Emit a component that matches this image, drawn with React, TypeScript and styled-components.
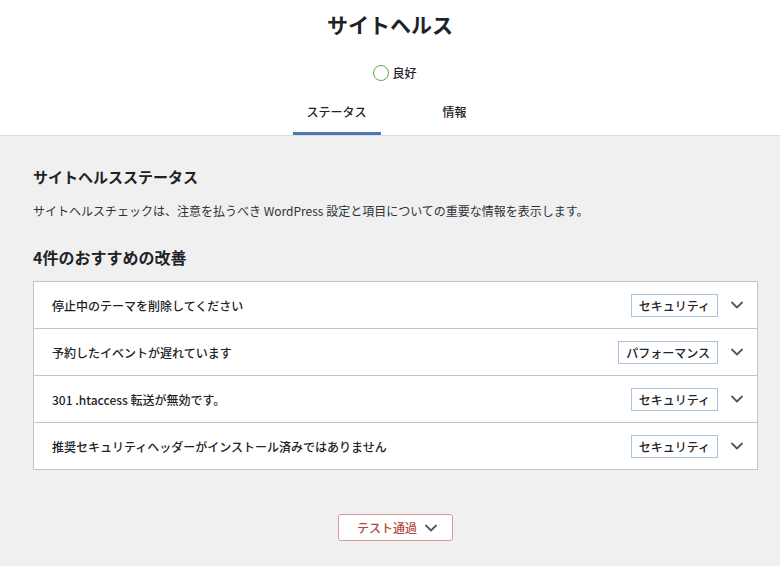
import React from "react";
import styled, { createGlobalStyle } from "styled-components";

const GlobalStyle = createGlobalStyle`
  html, body {
    margin: 0;
    padding: 0;
    background: #f0f0f1;
  }
  body {
    font-family: "Noto Sans CJK JP", "Noto Sans", sans-serif;
    color: #1d2327;
  }
`;

const Header = styled.header`
  background: #fff;
  border-bottom: 1px solid #dcdcde;
  display: flex;
  flex-direction: column;
  align-items: center;
`;

const Title = styled.h1`
  margin: 10px 0 0;
  font-size: 21px;
  font-weight: 700;
  line-height: 28px;
`;

const Status = styled.div`
  margin-top: 26px;
  display: flex;
  align-items: center;
  gap: 3px;
  font-size: 12px;
  font-weight: 500;
  line-height: 18px;
  padding-left: 10px;
`;

const Ring = styled.span`
  width: 14px;
  height: 14px;
  border-radius: 50%;
  border: 1.5px solid #5da94f;
`;

const Tabs = styled.nav`
  margin-top: 17px;
  display: flex;
  padding-left: 11px;
`;

const Tab = styled.div<{ $active?: boolean }>`
  width: 88px;
  margin-right: ${(p) => (p.$active ? "30px" : "0")};
  height: 36px;
  box-sizing: border-box;
  text-align: center;
  font-size: 12px;
  font-weight: 500;
  line-height: 26px;
  padding-bottom: 10px;
  border-bottom: 3px solid ${(p) => (p.$active ? "#4b77b6" : "transparent")};
`;

const Main = styled.main`
  padding: 29px 22px 0 33px;
`;

const SectionTitle = styled.h2`
  margin: 0;
  font-size: 15px;
  font-weight: 600;
  line-height: 24px;
`;

const Lead = styled.p`
  margin: 13px 0 0;
  font-size: 12px;
  line-height: 18px;
  color: #2c3338;
`;

const SubTitle = styled.h3`
  margin: 25px 0 0;
  font-size: 16px;
  font-weight: 600;
  line-height: 24px;
`;

const List = styled.div`
  margin-top: 12px;
  background: #fff;
  border: 1px solid #c3c4c7;
`;

const Row = styled.div`
  height: 46px;
  display: flex;
  align-items: center;
  padding: 0 13px 0 18px;
  & + & {
    border-top: 1px solid #c3c4c7;
  }
`;

const RowLabel = styled.span`
  flex: 1;
  font-size: 12px;
  font-weight: 500;
  color: #1d2327;
`;

const Badge = styled.span`
  border: 1px solid #a9c4df;
  padding: 0 7px;
  height: 21px;
  line-height: 21px;
  font-size: 12px;
  font-weight: 500;
  color: #1d2327;
`;

const Chevron = styled.svg`
  margin-left: 12px;
  width: 14px;
  height: 14px;
`;

const Footer = styled.div`
  display: flex;
  justify-content: center;
  padding-top: 44px;
`;

const PassedButton = styled.button`
  display: flex;
  align-items: center;
  height: 27px;
  padding: 0 14px 0 18px;
  background: #fff;
  border: 1px solid #d99a9a;
  border-radius: 3px;
  font-family: inherit;
  font-size: 12px;
  font-weight: 500;
  color: #b4483f;

  ${Chevron} {
    margin-left: 7px;
  }
`;

const Arrow = ({ color = "#50575e" }: { color?: string }) => (
  <Chevron viewBox="0 0 14 14" fill="none">
    <path d="M2 4.5 L7 9.5 L12 4.5" stroke={color} strokeWidth="1.8" strokeLinecap="round" strokeLinejoin="round" />
  </Chevron>
);

const items = [
  { text: "停止中のテーマを削除してください", tag: "セキュリティ" },
  { text: "予約したイベントが遅れています", tag: "パフォーマンス" },
  { text: "301 .htaccess 転送が無効です。", tag: "セキュリティ" },
  { text: "推奨セキュリティヘッダーがインストール済みではありません", tag: "セキュリティ" },
];

const App = () => (
  <>
    <GlobalStyle />
    <Header>
      <Title>サイトヘルス</Title>
      <Status>
        <Ring />
        <span>良好</span>
      </Status>
      <Tabs>
        <Tab $active>ステータス</Tab>
        <Tab>情報</Tab>
      </Tabs>
    </Header>
    <Main>
      <SectionTitle>サイトヘルスステータス</SectionTitle>
      <Lead>サイトヘルスチェックは、注意を払うべき WordPress 設定と項目についての重要な情報を表示します。</Lead>
      <SubTitle>4件のおすすめの改善</SubTitle>
      <List>
        {items.map((it, i) => (
          <Row key={i}>
            <RowLabel>{it.text}</RowLabel>
            <Badge>{it.tag}</Badge>
            <Arrow />
          </Row>
        ))}
      </List>
      <Footer>
        <PassedButton>
          テスト通過
          <Arrow />
        </PassedButton>
      </Footer>
    </Main>
  </>
);

export default App;
